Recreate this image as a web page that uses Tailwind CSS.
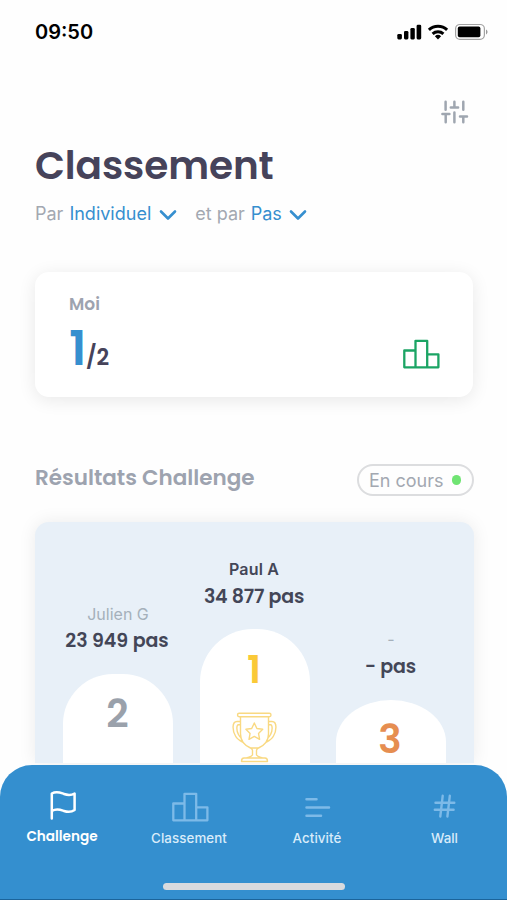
<!DOCTYPE html>
<html lang="fr">
<head>
<meta charset="utf-8">
<title>Classement</title>
<script src="https://cdn.jsdelivr.net/npm/@tailwindcss/browser@4"></script>
</head>
<body class="bg-white font-['Poppins','Inter',sans-serif]">
<div class="w-[507px] h-[900px] flex flex-col overflow-hidden whitespace-nowrap bg-[#fefefe]">
  <header class="h-[64px] shrink-0 flex justify-between pl-[35px] pr-[19px] font-['Inter']">
    <div class="mt-[20px] h-6 leading-6 text-[20px] font-semibold text-black">09:50</div>
    <svg class="mt-[20px]" width="92" height="24" viewBox="396 20 92 24">
      <g fill="#000"><rect x="397.3" y="34" width="4.6" height="5.4" rx="1.3"/><rect x="404" y="31" width="4.4" height="8.4" rx="1.3"/><rect x="410.4" y="28" width="4.4" height="11.4" rx="1.3"/><rect x="416.6" y="24.8" width="4.6" height="14.6" rx="1.3"/></g>
      <g fill="none" stroke="#000" stroke-width="3"><path d="M428.9 29.8a13.200 13.200 0 0 1 18.200 0"/><path d="M432.600 33.800a8 8 0 0 1 10.800 0"/></g>
      <path d="M434.900 36.200a4.600 4.600 0 0 1 6.200 0L438 39.400z"/>
      <rect x="455.600" y="24.500" width="28.800" height="14.800" rx="4.300" fill="#fff" stroke="#a3a3a3" stroke-width="1.200"/>
      <rect x="457.800" y="26.600" width="22.600" height="10.600" rx="1.800" fill="#000"/>
      <path d="M486 29.600v4.800c2-.7 2-4.100 0-4.800z" fill="#999"/>
    </svg>
  </header>

  <div class="h-[76px] shrink-0 flex justify-end pr-[38px] pt-[35px]">
    <svg width="28" height="26" viewBox="441 99 28 26" fill="none" stroke="#9fa6b0" stroke-width="2.500" stroke-linecap="round"><path d="M445.600 101.700v8M454.400 101.700v5.600M463.300 101.700v8M450.800 107.400h7.300M442.400 114h7M445.700 114.500v7.800M454.400 112.400v9.900M460 116.600h7M463.300 117v5.300"/></svg>
  </div>

  <main class="flex flex-col h-[625px] shrink-0 pl-[35px] pr-[33px]">
    <h1 class="h-[50px] leading-[52px] text-[39px] font-semibold text-[#46435a] tracking-[-0.1px]">Classement</h1>
    <div class="h-6 mt-[12px] leading-6 flex items-center text-[18px] font-['Inter'] text-[#a3a8b1]">
      <span>Par</span><span class="text-[#368fcf] ml-[6px]">Individuel</span>
      <svg class="ml-[8px] mt-[2px]" width="18" height="12" viewBox="0 0 18 12" fill="none" stroke="#368fcf" stroke-width="2.600" stroke-linecap="round" stroke-linejoin="round"><path d="M2 2.500 9 9.500 16 2.500"/></svg>
      <span class="ml-[18px]">et par</span><span class="text-[#368fcf] ml-[6px]">Pas</span>
      <svg class="ml-[7px] mt-[2px]" width="18" height="12" viewBox="0 0 18 12" fill="none" stroke="#368fcf" stroke-width="2.600" stroke-linecap="round" stroke-linejoin="round"><path d="M2 2.500 9 9.500 16 2.500"/></svg>
    </div>

    <section class="mt-[46px] h-[125px] shrink-0 w-[438px] rounded-[14px] bg-white shadow-[0_3px_18px_rgba(0,0,0,0.09)] flex justify-between pl-[33px] pr-[33px]">
      <div>
        <div class="mt-[20px] ml-px h-6 leading-6 text-[17px] font-semibold text-[#9da3af]">Moi</div>
        <div class="flex items-baseline h-[56px] leading-[58px] mt-[4px] font-semibold">
          <span class="text-[48px] w-[18px] pl-px tracking-[-2px] text-[#368fcf]">1</span><span class="text-[22px] tracking-[-0.3px] text-[#46435a]">/2</span>
        </div>
      </div>
      <svg class="mt-[66px]" width="38" height="32" viewBox="0 0 38 32" fill="none" stroke="#1ba464" stroke-width="2.300" stroke-linejoin="round"><path d="M2.300 29.300V12.500h11.200v16.800zM13.500 29.300V2.800h11.700v26.500zM25.200 29.300v-13h11.200v13z"/></svg>
    </section>

    <div class="mt-[67px] h-[32px] shrink-0 w-[439px] flex justify-between">
      <h2 class="h-[28px] leading-[28px] text-[21.5px] font-semibold text-[#9da3af]">Résultats Challenge</h2>
      <div class="w-[117px] h-[32px] rounded-full border-2 border-[#dcdddf] flex items-center pl-[10px] font-['Inter'] text-[18px] text-[#a3a8b1]">
        <span>En cours</span><i class="ml-[8px] size-[9.5px] rounded-full bg-[#70e473]"></i>
      </div>
    </div>

    <section class="mt-[26px] h-[241px] shrink-0 w-[439px] rounded-t-[14px] bg-[#e8f0f8] shadow-[0_0_18px_rgba(0,0,0,0.08)] flex items-end justify-between pl-[28px] pr-[28px] text-center text-[#434657]">
      <div class="w-[110px] flex flex-col items-center">
        <div class="h-[24px] leading-[24px] text-[16px] text-[#a5b0bb] font-['Inter']">Julien G</div>
        <div class="h-[28px] leading-[30px] text-[19px] mr-[2px] font-semibold tracking-[-0.05px]">23 949 pas</div>
        <div class="mt-[20px] w-[110px] h-[89px] rounded-t-[50px] bg-white text-[39px] leading-[48px] pt-[16px] pr-px font-semibold text-[#9aa1ab]">2</div>
      </div>
      <div class="w-[110px] flex flex-col items-center">
        <div class="h-[24px] leading-[22px] text-[16px] font-semibold font-['Inter'] mr-px tracking-[0.15px]">Paul A</div>
        <div class="h-[28px] leading-[30px] text-[19px] mr-px font-semibold tracking-[-0.2px]">34 877 pas</div>
        <div class="mt-[19px] w-[110px] h-[134px] rounded-t-[53px] bg-white text-[39px] leading-[48px] pt-[17px] font-semibold text-[#fac938] flex flex-col items-center"><span class="h-[48px] mr-px">1</span>
          <svg class="mt-[17px] mr-[2px]" width="46" height="52" viewBox="231 711 46 52" fill="none" stroke="#f9d982" stroke-width="1.400" stroke-linejoin="round">
            <rect x="237.500" y="713.200" width="33.500" height="3.500" rx="1.700"/>
            <path d="M240.500 716.700v17c0 8.500 6 12.500 10 14.300h8c4-1.800 10-5.800 10-14.300v-17M240.500 721.500h-3.500c-5.500 0-4.500 9.500-1.500 14.500 1.500 3 4 4.500 7 6M240.700 724.800h-2.200c-2.300 0-2 6-.2 9.400 1 2 2 3 3.200 4M268.500 721.500h3.500c5.500 0 4.500 9.500 1.500 14.500-1.500 3-4 4.500-7 6M268.300 724.800h2.200c2.300 0 2 6 .2 9.400-1 2-2 3-3.200 4M250.500 748c1 .8 2 1 2 2.500v4.500c-1 1.800-4 2.200-6 3h16c-2-.8-5-1.200-6-3v-4.500c0-1.500 1-1.700 2-2.500M244 758h21c1.500 0 2.500 1 2.500 3.500h-26c0-2.500 1-3.500 2.500-3.500z"/>
            <path d="m254.300 723 2.600 5.500 5.800.8-4.200 4.100 1.100 5.900-5.300-2.900-5.300 2.900 1.100-5.900-4.200-4.100 5.800-.8z"/>
          </svg>
        </div>
      </div>
      <div class="w-[110px] flex flex-col items-center">
        <div class="h-[24px] leading-[22px] text-[16px] text-[#a5b0bb] font-['Inter']">-</div>
        <div class="h-[28px] leading-[30px] text-[19px] mr-px font-semibold tracking-[-0.1px]">- pas</div>
        <div class="mt-[20px] w-[110px] h-[63px] rounded-t-[55px_42px] bg-white text-[39px] leading-[48px] pt-[16px] pr-[2px] font-semibold text-[#e68e51]">3</div>
      </div>
    </section>
  </main>

  <nav class="relative h-[135px] shrink-0 bg-[#348fcf] rounded-t-[32px] border-b border-[#1b649b] flex flex-col items-center justify-between">
    <div class="w-full grid grid-cols-[124px_130px_126px_127px] text-center text-[13.3px] text-[#d9ecfa] font-medium font-['Inter']">
      <a class="flex flex-col items-center pt-[25px] text-white font-['Poppins']">
        <svg class="ml-[2px]" width="28" height="31" viewBox="0 0 28 31" fill="none" stroke="#fff" stroke-width="2.500" stroke-linecap="round" stroke-linejoin="round"><path d="M2.800 28.500V3.500C8 .5 12 3 15 4s7 1.500 10.600-.5V20C22 22.500 18 22 15 21s-7-3-12.200 0"/></svg>
        <span class="mt-[6px] h-5 leading-5 font-semibold text-[13.6px]">Challenge</span></a>
      <a class="flex flex-col items-center pt-[26px]">
        <svg class="ml-[2px]" width="38" height="32" viewBox="0 0 38 32" fill="none" stroke="#7dbae8" stroke-width="2.300" stroke-linejoin="round"><path d="M2.300 29.300V12.500h11.200v16.800zM13.500 29.300V2.800h11.700v26.500zM25.200 29.300v-13h11.200v13z"/></svg>
        <span class="mt-[5px] h-5 leading-5 tracking-[0.1px]">Classement</span></a>
      <a class="flex flex-col items-center pt-[26px]">
        <svg width="28" height="32" viewBox="0 0 28 32" fill="none" stroke="#7dbae8" stroke-width="2.500" stroke-linecap="round"><path d="M3.500 8.300h10M3.500 16.400h22.500M3.500 24.700h14.500"/></svg>
        <span class="mt-[5px] h-5 leading-5 tracking-[0.1px]">Activité</span></a>
      <a class="flex flex-col items-center pt-[26px] pl-[2px]">
        <svg width="24" height="32" viewBox="0 0 24 32" fill="none" stroke="#7dbae8" stroke-width="2.400" stroke-linecap="round"><path d="M9.700 4.800 7.300 25.500M16.800 4.800 14.400 25.500M2.500 11.800h18.800M1.800 18.800h18.800"/></svg>
        <span class="mt-[5px] h-5 leading-5">Wall</span></a>
    </div>
    <div class="w-[182px] h-[7px] rounded-full bg-[#d8dade] mb-[9px]"></div>
  </nav>
</div>
</body>
</html>
